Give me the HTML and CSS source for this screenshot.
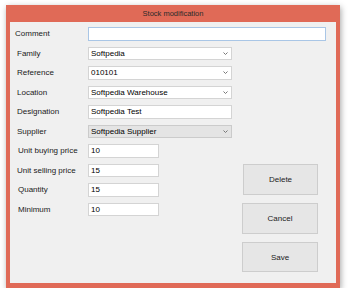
FILE: index.html
```html
<!DOCTYPE html>
<html lang="en">
<head>
    <meta charset="UTF-8">
    <meta name="viewport" content="width=device-width, initial-scale=1.0">
    <title>Stock modification</title>
    <link rel="stylesheet" href="styles.css">
</head>
<body>
    <div class="window">
        <div class="titlebar">Stock modification</div>
        <div class="content">
            <div class="form">
                <label class="first">Comment</label>
                <div class="field wide focused"></div>

                <label>Family</label>
                <div class="field combo">Softpedia <svg class="arrow" width="5" height="3" viewBox="0 0 5 3"><polyline points="0.5,0.5 2.5,2.5 4.5,0.5" fill="none" stroke="#777" stroke-width="1"/></svg></div>

                <label>Reference</label>
                <div class="field combo">010101 <svg class="arrow" width="5" height="3" viewBox="0 0 5 3"><polyline points="0.5,0.5 2.5,2.5 4.5,0.5" fill="none" stroke="#777" stroke-width="1"/></svg></div>

                <label>Location</label>
                <div class="field combo">Softpedia Warehouse <svg class="arrow" width="5" height="3" viewBox="0 0 5 3"><polyline points="0.5,0.5 2.5,2.5 4.5,0.5" fill="none" stroke="#777" stroke-width="1"/></svg></div>

                <label>Designation</label>
                <div class="field medium">Softpedia Test</div>

                <label>Supplier</label>
                <div class="field combo list">Softpedia Supplier <svg class="arrow" width="5" height="3" viewBox="0 0 5 3"><polyline points="0.5,0.5 2.5,2.5 4.5,0.5" fill="none" stroke="#777" stroke-width="1"/></svg></div>

                <label class="nudge">Unit buying price</label>
                <div class="field small">10</div>

                <label>Unit selling price</label>
                <div class="field small">15</div>

                <label class="nudge">Quantity</label>
                <div class="field small">15</div>

                <label class="nudge">Minimum</label>
                <div class="field small">10</div>
            </div>
            <div class="buttons">
                <button class="btn delete">Delete</button>
                <button class="btn">Cancel</button>
                <button class="btn save">Save</button>
            </div>
        </div>
    </div>
</body>
</html>
```

FILE: styles.css
```css
body {
    margin: 0;
    background-color: #ffffff;
    font-family: "Liberation Sans", Arial, sans-serif;
    font-size: 8px;
    color: #1a1a1a;
}
.window {
    width: 334px;
    height: 283px;
    margin: 5px 0 0 6px;
    background-color: #e06a57;
    box-shadow: 1px 2px 6px rgba(0, 0, 0, 0.35);
    display: flex;
    flex-direction: column;
}
.titlebar {
    height: 17px;
    line-height: 17px;
    text-align: center;
    font-size: 7.5px;
    color: #2a2a2a;
}
.content {
    flex: 1;
    margin: 0 4px 5px 4px;
    background-color: #f0f0f0;
    display: flex;
    justify-content: space-between;
    padding: 5px 18px 11px 7px;
}
.form {
    flex: 1;
    min-width: 0;
    display: grid;
    grid-template-columns: 71px auto;
    grid-auto-rows: 13.5px;
    row-gap: 6px;
    align-items: center;
    align-content: start;
    justify-content: start;
}
.form label {
    white-space: nowrap;
}
.form label.first {
    margin-left: -2px;
}
.form label.nudge {
    margin-left: 1px;
}
.field {
    height: 13.5px;
    box-sizing: border-box;
    background-color: #ffffff;
    border: 1px solid #d4d4d4;
    padding: 0 2px;
    line-height: 11.5px;
    color: #000;
}
.wide {
    width: 238px;
}
.focused {
    border-color: #a9c6e6;
}
.medium {
    width: 144px;
}
.small {
    width: 71px;
}
.combo {
    width: 144px;
    display: flex;
    justify-content: space-between;
    align-items: center;
    padding-right: 3px;
}
.combo.list {
    background-color: #e4e4e4;
    border-color: #cbcbcb;
}
.buttons {
    flex-shrink: 0;
    width: 76px;
    display: flex;
    flex-direction: column;
    justify-content: flex-end;
    align-items: flex-end;
    gap: 8px;
}
.btn {
    width: 76px;
    height: 31px;
    background-color: #e6e6e6;
    border: 1px solid #cdcdcd;
    font-family: "Liberation Sans", Arial, sans-serif;
    font-size: 8px;
    color: #222;
    padding: 0;
}
.btn.delete {
    width: 75px;
}
.btn.save {
    height: 30px;
}
```
